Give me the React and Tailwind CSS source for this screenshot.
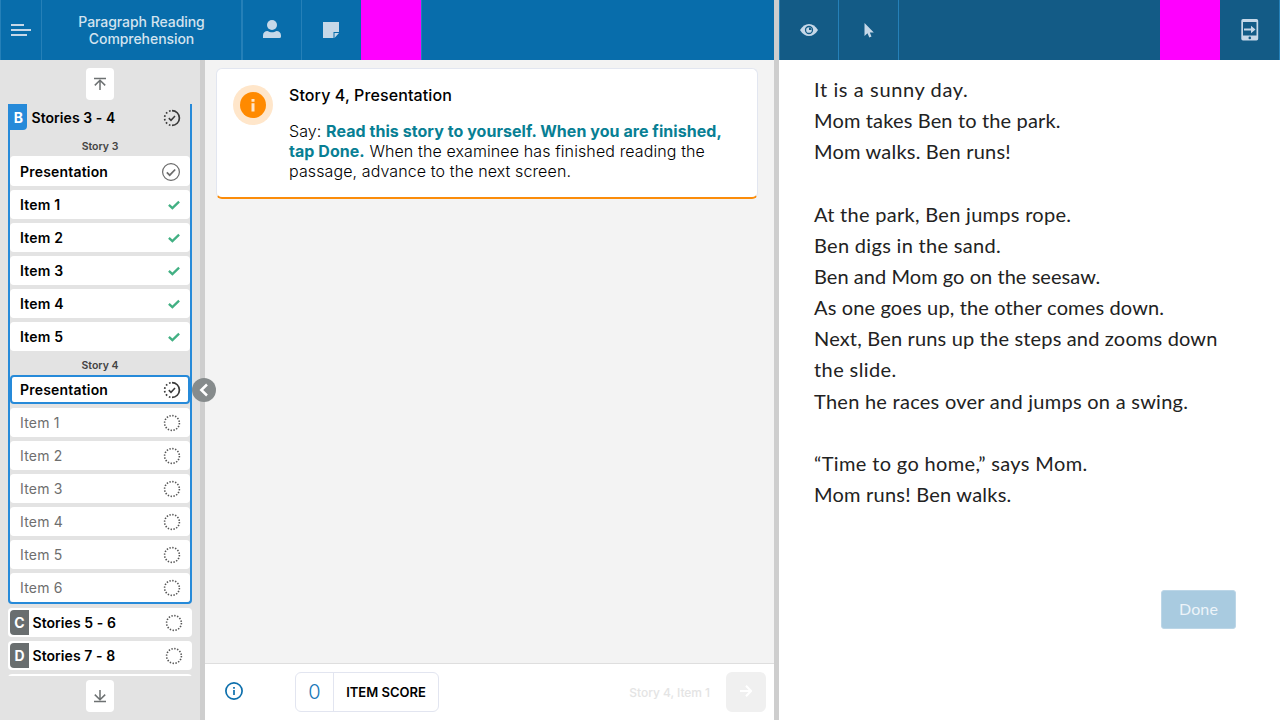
import React from "react";

const story = [
  ["It is a sunny day.", "tracking-[0.61px]"],
  ["Mom takes Ben to the park.", "tracking-[0.15px]"],
  ["Mom walks. Ben runs!", "tracking-[0.2px]"],
  ["", ""],
  ["At the park, Ben jumps rope.", "tracking-[0.29px]"],
  ["Ben digs in the sand.", "tracking-[0.31px]"],
  ["Ben and Mom go on the seesaw.", "tracking-[0.05px]"],
  ["As one goes up, the other comes down.", "tracking-[0.14px]"],
  ["Next, Ben runs up the steps and zooms down", "tracking-[0.17px]"],
  ["the slide.", "tracking-[0.4px]"],
  ["Then he races over and jumps on a swing.", "tracking-[0.26px]"],
  ["", ""],
  ["“Time to go home,” says Mom.", "tracking-[0.36px]"],
  ["Mom runs! Ben walks.", "tracking-[0.23px]"],
];

function DottedCircle() {
  return (
    <svg width="18" height="18" viewBox="0 0 18 18" fill="none">
      <circle cx="9" cy="9" r="7.4" stroke="#555" strokeWidth="1.6" strokeDasharray="1.4 1.506" />
    </svg>
  );
}

function PartialCheck() {
  return (
    <svg width="18" height="18" viewBox="0 0 18 18" fill="none" stroke="#3a3a3a">
      <path d="M9 1.6A7.4 7.4 0 0 1 9 16.4" strokeWidth="1.7" />
      <path d="M9 16.4A7.4 7.4 0 0 1 9 1.6" strokeWidth="1.7" strokeDasharray="1.6 2.1" strokeDashoffset="-1.6" />
      <path d="M5.8 9.1l2.2 2.2 4-4.3" strokeWidth="1.5" />
    </svg>
  );
}

function DoneCircle() {
  return (
    <svg width="20" height="20" viewBox="0 0 20 20" fill="none" stroke="#6b6b6b">
      <circle cx="10" cy="10" r="8.4" strokeWidth="1.2" />
      <path d="M5.8 10.4l2.9 2.8 5.5-5.7" strokeWidth="1.7" />
    </svg>
  );
}

function GreenCheck() {
  return (
    <svg width="12" height="10" viewBox="0 0 12 10" fill="none">
      <path d="M0.9 4.8l3.5 3.3 6.7-6.5" stroke="#42b083" strokeWidth="2.3" />
    </svg>
  );
}

function Row({ label, icon, className = "" }) {
  return (
    <div className={`flex h-[29px] shrink-0 items-center justify-between rounded bg-white pl-2.5 pr-[9px] tracking-[0.19px] ${className}`}>
      <span>{label}</span>
      {icon}
    </div>
  );
}

function StoryGroup({ letter, label }) {
  return (
    <div className="flex h-[29px] shrink-0 items-center rounded bg-white pl-0.5 pr-[9px]">
      <span className="flex h-[25px] w-[19px] items-center justify-center rounded-l bg-[#696e6f] font-bold text-white">{letter}</span>
      <span className="ml-[3.5px] flex-1 font-semibold tracking-[0.06px] text-black">{label}</span>
      <DottedCircle />
    </div>
  );
}

function Sidebar() {
  return (
    <aside className="flex w-[200px] shrink-0 flex-col items-center bg-[#e3e3e3] pt-2 text-sm">
      <button className="flex h-8 w-7 shrink-0 items-center justify-center rounded bg-white">
        <svg width="14" height="14" viewBox="0 0 14 14" fill="none" stroke="#6d7172" strokeWidth="1.5">
          <path d="M1 1.6h12M7 13V3M1.8 8.4L7 3.2l5.2 5.2" />
        </svg>
      </button>
      <div className="mt-1 flex h-[572px] w-[184px] flex-col gap-1 overflow-hidden">
        <div className="flex shrink-0 flex-col rounded-b border-x-2 border-b-2 border-[#268ad9]">
          <div className="flex h-[34px] items-start pr-[9px]">
            <span className="flex h-[26px] w-[17px] items-center justify-center rounded-br bg-[#268ad9] pt-0.5 font-bold text-white">B</span>
            <span className="ml-[4.5px] flex-1 pt-1 font-semibold tracking-[0.06px] text-black">Stories 3 - 4</span>
            <span className="pt-[5px]"><PartialCheck /></span>
          </div>
          <div className="h-[18px] text-center text-[10.5px] leading-[17px] font-semibold text-[#444]">Story 3</div>
          <div className="flex flex-col gap-1 font-semibold text-black">
            <Row label="Presentation" icon={<DoneCircle />} className="h-[30px]! pt-px" />
            {[1, 2, 3, 4, 5].map((n) => (
              <Row key={n} label={`Item ${n}`} icon={<GreenCheck />} className="pr-2.5!" />
            ))}
          </div>
          <div className="h-6 text-center text-[10.5px] leading-[29px] font-semibold text-[#444]">Story 4</div>
          <div className="flex flex-col gap-1 text-[#6e6e6e]">
            <Row
              label="Presentation"
              icon={<PartialCheck />}
              className="border-2 border-[#268ad9] pl-2! pr-[7px]! font-semibold text-black"
            />
            {[1, 2, 3, 4, 5, 6].map((n) => (
              <Row key={n} label={`Item ${n}`} icon={<DottedCircle />} />
            ))}
          </div>
        </div>
        <StoryGroup letter="C" label="Stories 5 - 6" />
        <StoryGroup letter="D" label="Stories 7 - 8" />
        <div className="h-[29px] shrink-0 rounded bg-white" />
      </div>
      <button className="mt-1 flex h-8 w-7 shrink-0 items-center justify-center rounded bg-white">
        <svg width="14" height="14" viewBox="0 0 14 14" fill="none" stroke="#6d7172" strokeWidth="1.5">
          <path d="M1 12.6h12M7 1v10M1.8 5.6L7 10.8l5.2-5.2" />
        </svg>
      </button>
    </aside>
  );
}

function ExaminerHeader() {
  return (
    <header className="flex h-[60px] shrink-0 border-l border-[#2580b8] bg-[#086dab] text-[#c6d8e8]">
      <div className="flex w-[41px] items-center border-r border-[#2580b8] pl-2.5">
        <svg width="20" height="12" viewBox="0 0 20 12" fill="#c6d8e8">
          <path d="M0 0h13v2H0zM0 5h20v2H0zM0 10h16v2H0z" />
        </svg>
      </div>
      <div className="flex w-[201px] items-center justify-center border-r-2 border-[#2580b8] text-center text-sm leading-[17px] font-medium tracking-[-0.06px] text-[#d3e3ef]">
        Paragraph Reading
        <br />
        Comprehension
      </div>
      <div className="flex w-[59px] items-center justify-center border-r border-[#2580b8] pr-px pb-0.5">
        <svg width="18" height="18" viewBox="0 0 18 18" fill="#c6d8e8">
          <circle cx="9" cy="5" r="5" />
          <path d="M0 18v-2.5C0 12.6 2 11 4.5 11c1.5.9 2.9 1.2 4.5 1.2s3-.3 4.5-1.2C16 11 18 12.6 18 15.500V16.500a1.500 1.500 0 0 1-1.500 1.500z" />
        </svg>
      </div>
      <div className="flex w-[59px] items-center justify-center pr-0.5">
        <svg width="16" height="16" viewBox="0 0 16 16" fill="#c6d8e8">
          <path d="M0 0h16v10h-5.500v6H0zM11.500 11H16l-4.500 5z" />
        </svg>
      </div>
      <div className="w-[61px] border-r border-[#2580b8] bg-[#ff00ff]" />
    </header>
  );
}

function Instructions() {
  return (
    <section className="flex h-[131px] rounded-md border border-b-2 border-[#e2e6f0] border-b-[#fb8c0a] bg-white pl-4">
      <span className="mt-4 flex size-10 shrink-0 items-center justify-center rounded-full bg-[#ffe6ca]">
        <svg width="26" height="26" viewBox="0 0 26 26">
          <circle cx="13" cy="13" r="13" fill="#ff8a00" />
          <path d="M11.500 7h3v2.700h-3zM11.500 11.300h3V19.500h-3z" fill="#ffe6ca" />
        </svg>
      </span>
      <div className="ml-4 pt-4 text-base leading-5 tracking-[0.11px] text-black">
        <h1 className="font-medium">Story 4, Presentation</h1>
        <p className="mt-4 font-light whitespace-nowrap">
          Say: <b className="font-bold tracking-[0.05px] text-[#087f94]">Read this story to yourself. When you are finished,</b>
          <br />
          <b className="font-bold tracking-[0.05px] text-[#087f94]">tap Done.</b> When the examinee has finished reading the
          <br />
          passage, advance to the next screen.
        </p>
      </div>
    </section>
  );
}

function ScoreBar() {
  return (
    <footer className="flex h-[57px] shrink-0 items-center border-t border-[#dedede] bg-white pr-2 pl-5">
      <svg className="mb-0.5" width="18" height="18" viewBox="0 0 18 18" fill="none" stroke="#0d6fac">
        <circle cx="9" cy="9" r="8.100" strokeWidth="1.700" />
        <path d="M9 5v1.700M9 8v5" strokeWidth="1.700" />
      </svg>
      <div className="ml-[52px] flex h-10 w-36 items-center rounded-md border border-[#e2e5f0]">
        <span className="flex h-full w-[38px] items-center justify-center border-r border-[#e2e5f0] text-xl font-light text-[#1878b8]">0</span>
        <span className="flex-1 pt-0.5 text-center text-[13px] font-semibold text-black">ITEM SCORE</span>
      </div>
      <span className="ml-auto pt-0.5 text-xs font-medium tracking-[-0.05px] text-[#e4e4e4]">Story 4, Item 1</span>
      <button className="ml-4 flex size-10 items-center justify-center rounded-md bg-[#f0f0f0] pb-0.5">
        <svg width="12" height="12" viewBox="0 0 12 12" fill="none" stroke="#fff" strokeWidth="2">
          <path d="M0 6h10.500M6 .8L11 6l-5 5.200" />
        </svg>
      </button>
    </footer>
  );
}

function ExamineeHeader() {
  return (
    <header className="flex h-[60px] shrink-0 border-l border-[#2580b8] bg-[#135b86]">
      <div className="flex w-[59px] items-center justify-center border-r border-[#2580b8] pb-px">
        <svg width="18" height="12" viewBox="0 0 18 12">
          <path d="M0 6C2.500 2 5.500 0 9 0s6.500 2 9 6c-2.500 4-5.500 6-9 6S2.500 10 0 6z" fill="#c6d8e8" />
          <circle cx="9" cy="6" r="3.500" fill="none" stroke="#135b86" strokeWidth="1.300" />
          <path d="M9 6V3.500A2.500 2.500 0 0 1 11.500 6z" fill="#135b86" />
        </svg>
      </div>
      <div className="flex w-[60px] items-center justify-center border-r border-[#2580b8]">
        <svg width="10" height="15" viewBox="0 0 10 15" fill="#c6d8e8">
          <path d="M.5 0v13l3-2.700L5.300 14.500l2.200-1L5.800 9.500H9.800z" />
        </svg>
      </div>
      <div className="ml-auto w-[60px] bg-[#ff00ff]" />
      <div className="flex w-[60px] items-center justify-center border-r border-[#2580b8] pb-px">
        <svg width="18" height="22" viewBox="0 0 18 22">
          <path fillRule="evenodd" d="M2 0h13.500a1.700 1.700 0 0 1 1.700 1.700v18a1.700 1.700 0 0 1-1.700 1.700H2A1.700 1.700 0 0 1 .3 19.700v-18A1.700 1.700 0 0 1 2 0zM2 3v13.500h13.500V3z" fill="#c6d8e8" />
          <path d="M3 9.500h7V6.800l4.500 3.700-4.500 3.700v-2.700H3z" fill="#c6d8e8" />
          <circle cx="8.800" cy="18.900" r="1.300" fill="#135b86" />
        </svg>
      </div>
    </header>
  );
}

export default function App() {
  return (
    <div className="flex h-[720px] w-[1280px] overflow-hidden bg-white font-['Inter',sans-serif]">
      <div className="flex w-[774px] shrink-0 flex-col">
        <ExaminerHeader />
        <div className="flex min-h-0 flex-1">
          <Sidebar />
          <div className="relative w-[5px] shrink-0 bg-[#cecece]">
            <button className="absolute top-[318px] -left-2 z-10 flex size-6 items-center justify-center rounded-full bg-[#868b8c]">
              <svg width="10" height="14" viewBox="0 0 10 14" fill="none" stroke="#fff" strokeWidth="2.500">
                <path d="M8 1.500L2.300 7 8 12.500" />
              </svg>
            </button>
          </div>
          <main className="flex flex-1 flex-col bg-[#f3f3f3]">
            <div className="flex-1 pt-2 pr-4 pl-[11px]">
              <Instructions />
            </div>
            <ScoreBar />
          </main>
        </div>
      </div>
      <div className="w-[5px] shrink-0 bg-[#cecece]" />
      <div className="flex flex-1 flex-col">
        <ExamineeHeader />
        <div className="pt-[14px] pl-[35px] font-['Lato',sans-serif] text-[20px] leading-[31.170px] text-[#222]">
          {story.map(([text, tracking], i) => (
            <p key={i} className={`h-[31.170px] whitespace-nowrap ${tracking}`}>{text}</p>
          ))}
        </div>
        <div className="mt-auto mr-11 mb-[91.500px] flex justify-end">
          <button className="h-[39px] w-[75px] rounded-[3px] border border-[#bcd6e7] bg-[#a9cbe0] font-['Lato',sans-serif] text-base tracking-[0.100px] text-[#edf4f9]">
            Done
          </button>
        </div>
      </div>
    </div>
  );
}
